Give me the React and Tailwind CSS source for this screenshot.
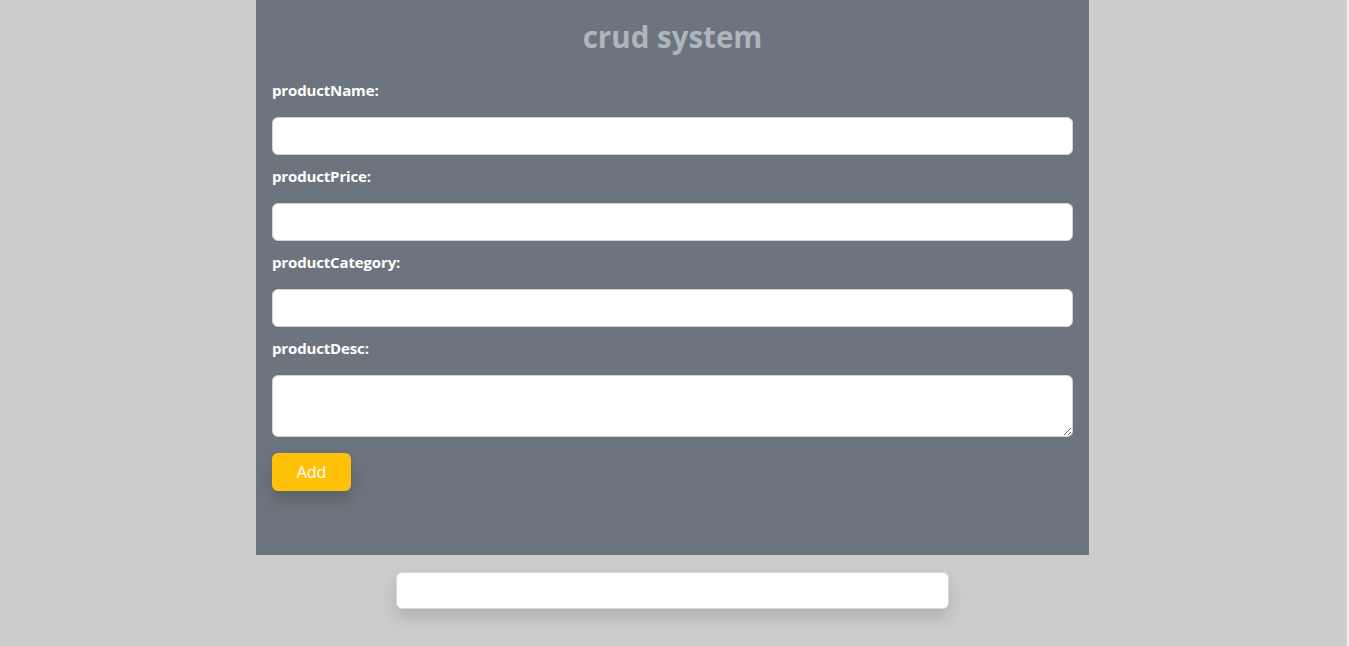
export default function App() {
  const fields = ["productName", "productPrice", "productCategory"];
  return (
    <div
      className="min-h-[646px] w-full bg-[#cccccc] flex"
      style={{ fontFamily: '"Open Sans", "Noto Sans", sans-serif' }}
    >
      <div className="flex-1 flex flex-col items-center">
        <div className="w-[833px] bg-[#6c757d] px-4 pt-[16px] pb-[64px]">
          <h2 className="text-center text-[29.5px] leading-[42px] font-bold text-[#adb5bd] mb-[20px]">
            crud system
          </h2>
          {fields.map((f, i) => (
            <div key={f} className={i === 0 ? "" : "pt-[9px]"}>
              <label className="block text-[15px] leading-[24px] font-bold text-white mb-[15px] tracking-[-0.15px]">
                {f}:
              </label>
              <input
                type="text"
                className="block w-full h-[38px] bg-white border border-[#ced4da] rounded-[6px] px-3 outline-none"
              />
            </div>
          ))}
          <div className="pt-[9px]">
            <label className="block text-[15px] leading-[24px] font-bold text-white mb-[15px] tracking-[-0.15px]">
              productDesc:
            </label>
            <textarea
              rows={2}
              className="block w-full h-[62px] bg-white border border-[#ced4da] rounded-[6px] px-3 outline-none resize-y"
            ></textarea>
          </div>
          <button className="mt-[16px] w-[79px] h-[38px] bg-[#ffc107] text-white text-[16px] rounded-[6px] shadow-[0_8px_16px_rgba(0,0,0,0.18)]">
            Add
          </button>
        </div>
        <input
          type="text"
          className="mt-[17px] w-[553px] h-[37px] bg-white border border-[#d4d9de] rounded-[6px] shadow-[0_8px_16px_rgba(0,0,0,0.15)] outline-none"
        />
      </div>
      <div className="w-[4px] flex">
        <div className="w-[2px] bg-[#cccccc]"></div>
        <div className="w-[2px] bg-[#f1f1f1]"></div>
      </div>
    </div>
  );
}
